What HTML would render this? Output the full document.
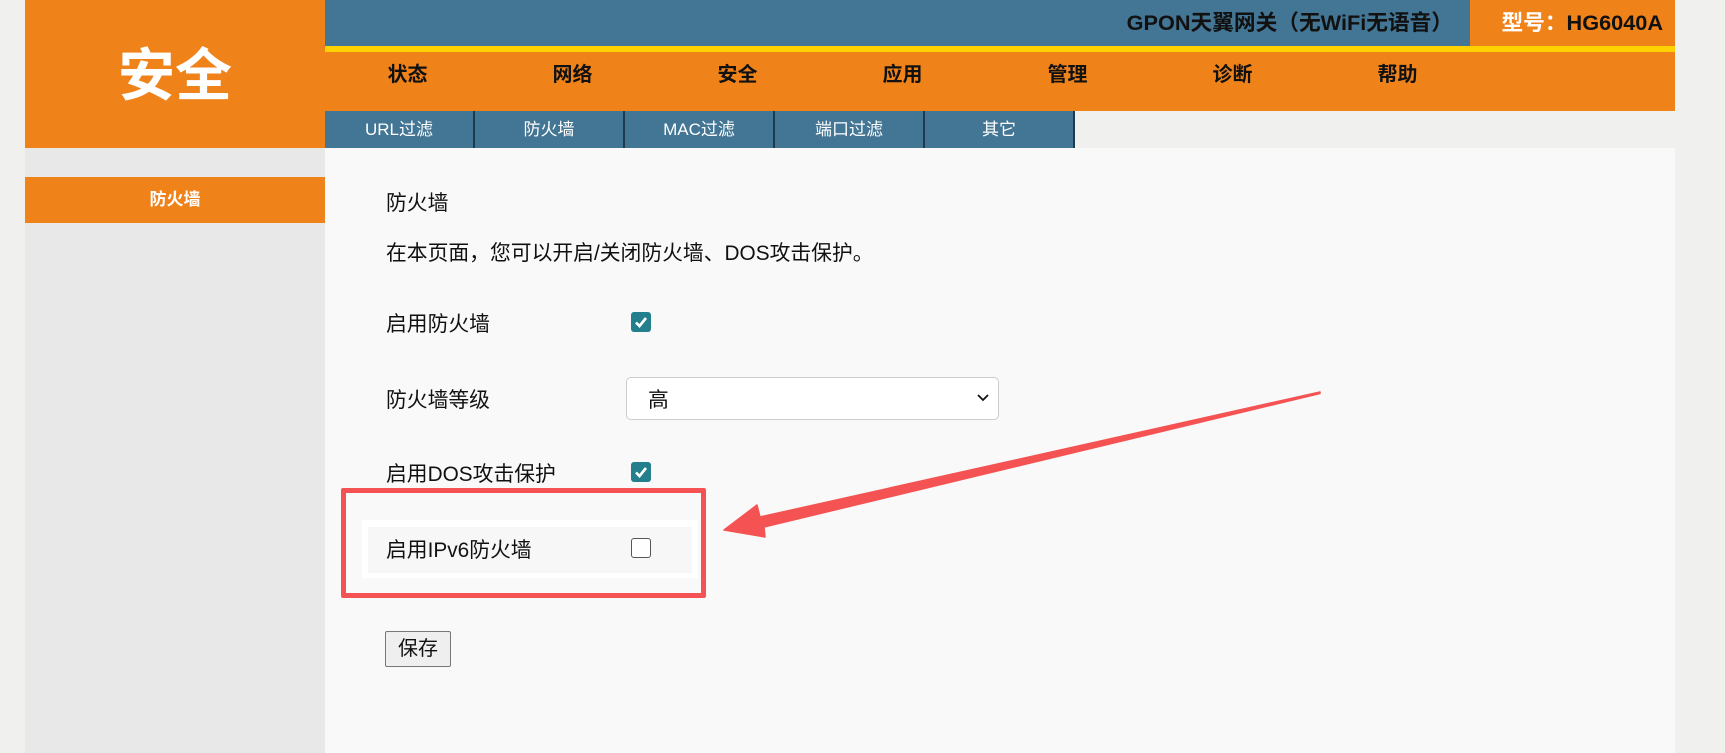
<!DOCTYPE html>
<html><head><meta charset="utf-8"><style>
*{margin:0;padding:0;box-sizing:border-box}
body{width:1725px;height:753px;background:#f0f1ef;position:relative;overflow:hidden;font-family:"Liberation Sans","Noto Sans CJK SC",sans-serif;color:#111}
.a{position:absolute}
.or{background:#f0821a}
.bl{background:#437594}
.nav{top:52px;height:59px;width:165px;text-align:center;line-height:46px;font-size:20px;font-weight:bold;color:#111}
.tab{top:111px;height:37px;width:150px;text-align:center;line-height:38px;font-size:17px;color:#fff;border-right:2px solid #1e3a4e}
.lbl{left:386px;font-size:20.8px;line-height:26px}
.cb{width:20px;height:20px;border-radius:3px;background:#237f8b}
</style></head><body>
<div class="a or" style="left:25px;top:0;width:300px;height:148px"></div>
<div class="a" style="left:25px;top:44px;width:300px;text-align:center;font-size:57px;font-weight:bold;color:#fff;line-height:64px">安全</div>
<div class="a bl" style="left:325px;top:0;width:1145px;height:47px"></div>
<div class="a or" style="left:1470px;top:0;width:205px;height:47px"></div>
<div class="a" style="left:900px;top:9px;width:553px;text-align:right;font-size:21.7px;font-weight:bold;color:#111;line-height:28px">GPON天翼网关（无WiFi无语音）</div>
<div class="a" style="left:1470px;top:9px;width:193px;text-align:right;font-size:21.7px;font-weight:bold;line-height:28px;white-space:nowrap"><span style="color:#fff">型号：</span>HG6040A</div>
<div class="a" style="left:325px;top:46px;width:1350px;height:6px;background:#ffd200"></div>
<div class="a or" style="left:325px;top:52px;width:1350px;height:59px"></div>
<div class="a nav" style="left:325px">状态</div>
<div class="a nav" style="left:490px">网络</div>
<div class="a nav" style="left:655px">安全</div>
<div class="a nav" style="left:820px">应用</div>
<div class="a nav" style="left:985px">管理</div>
<div class="a nav" style="left:1150px">诊断</div>
<div class="a nav" style="left:1315px">帮助</div>
<div class="a bl tab" style="left:325px">URL过滤</div>
<div class="a bl tab" style="left:475px">防火墙</div>
<div class="a bl tab" style="left:625px">MAC过滤</div>
<div class="a bl tab" style="left:775px">端口过滤</div>
<div class="a bl tab" style="left:925px">其它</div>
<div class="a" style="left:25px;top:148px;width:300px;height:605px;background:#e8e8e8"></div>
<div class="a or" style="left:25px;top:177px;width:300px;height:46px;text-align:center;line-height:46px;color:#fff;font-weight:bold;font-size:17px">防火墙</div>
<div class="a" style="left:325px;top:148px;width:1350px;height:605px;background:#f9f9f9"></div>
<div class="a lbl" style="top:191px">防火墙</div>
<div class="a lbl" style="top:241px">在本页面，您可以开启/关闭防火墙、DOS攻击保护。</div>
<div class="a lbl" style="top:312px">启用防火墙</div>
<div class="a cb" style="left:631px;top:312px"><svg width="20" height="20"><path d="M5 10.5l3.5 3.5 6.5-8" stroke="#fff" stroke-width="2.6" fill="none"/></svg></div>
<div class="a lbl" style="top:388px">防火墙等级</div>
<div class="a" style="left:626px;top:377px;width:373px;height:43px;border:1px solid #ccc;border-radius:5px;background:#fff"></div>
<div class="a" style="left:648px;top:388px;font-size:20.8px;line-height:26px">高</div>
<svg class="a" style="left:976px;top:393px" width="14" height="10"><path d="M2 2l5 5 5-5" stroke="#111" stroke-width="1.8" fill="none"/></svg>
<div class="a lbl" style="top:462px">启用DOS攻击保护</div>
<div class="a cb" style="left:631px;top:462px"><svg width="20" height="20"><path d="M5 10.5l3.5 3.5 6.5-8" stroke="#fff" stroke-width="2.6" fill="none"/></svg></div>
<div class="a" style="left:341px;top:488px;width:365px;height:110px;border:5px solid #f55353;border-radius:2px"></div>
<div class="a" style="left:362px;top:520px;width:336px;height:58px;background:#fff"></div>
<div class="a" style="left:368px;top:527px;width:324px;height:46px;background:#f7f7f7"></div>
<div class="a lbl" style="top:538px">启用IPv6防火墙</div>
<div class="a" style="left:631px;top:538px;width:20px;height:20px;border:1.5px solid #555;border-radius:3px;background:#fff"></div>
<div class="a" style="left:385px;top:631px;width:66px;height:36px;border:1px solid #777;border-radius:2px;background:#efefef;font-size:20px;text-align:center;line-height:34px">保存</div>
<svg class="a" style="left:0;top:0" width="1725" height="753"><polygon points="724,530 757,505 760,517 1320,392 1320,393.5 764,527 765,537" fill="#f55353" stroke="#f55353" stroke-width="1.5" stroke-linejoin="round"/></svg>
</body></html>
